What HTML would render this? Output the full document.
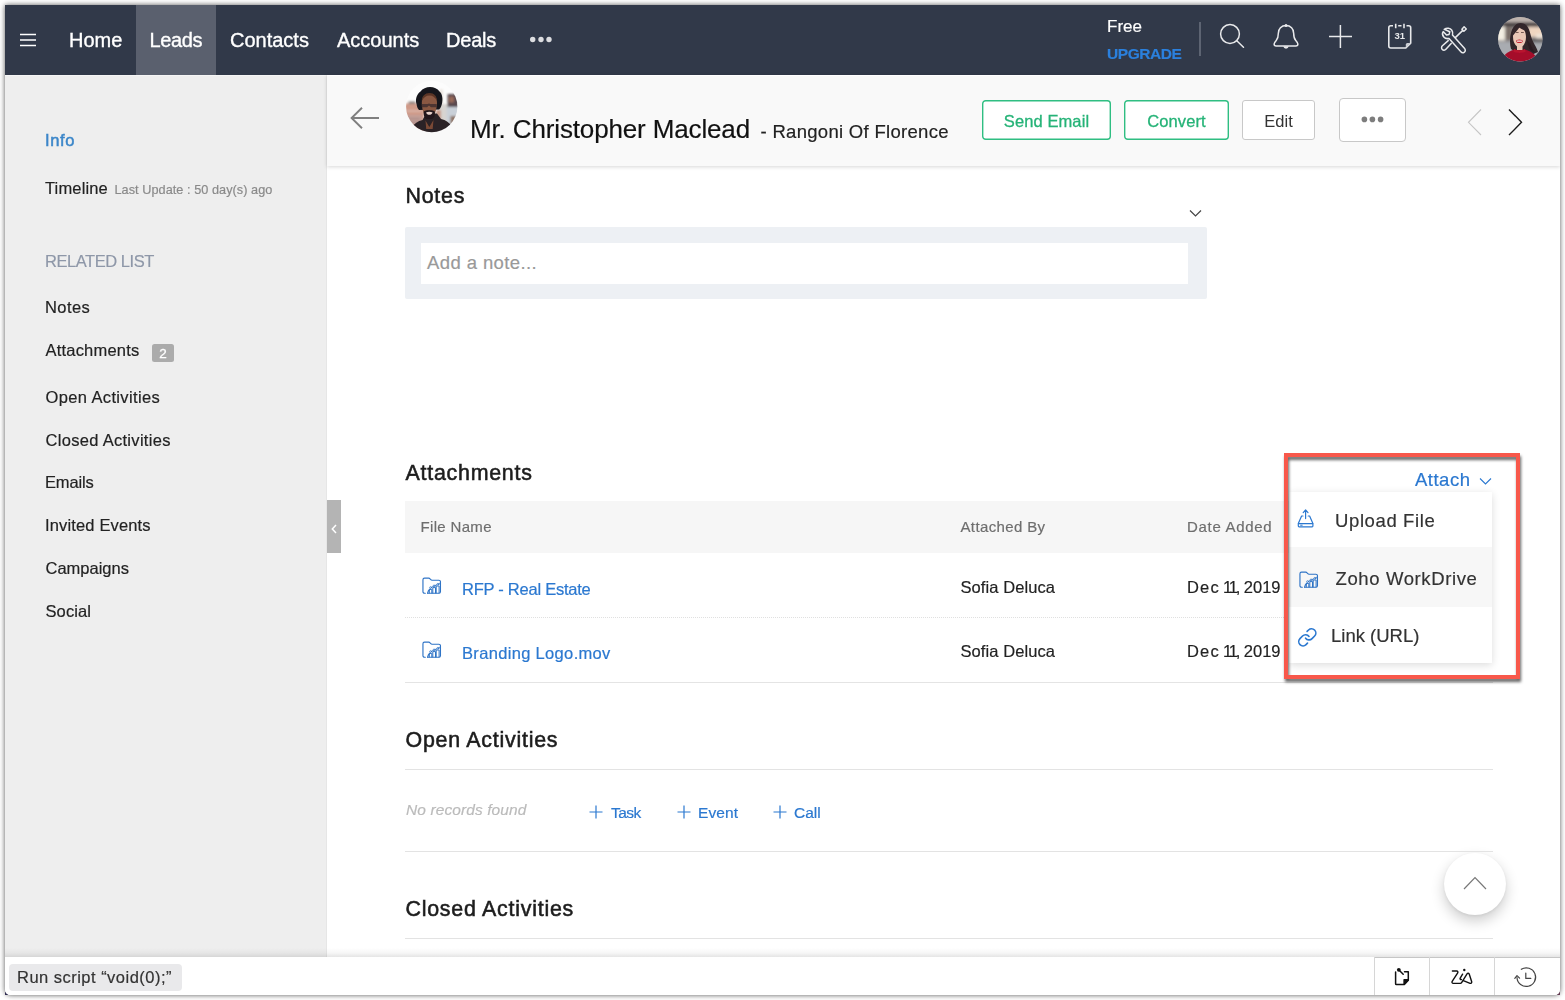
<!DOCTYPE html>
<html lang="en">
<head>
<meta charset="utf-8">
<title>Mr. Christopher Maclead - Leads</title>
<style>
*{box-sizing:border-box;margin:0;padding:0}
html,body{width:1565px;height:1000px;overflow:hidden;background:#fff}
body{font-family:"Liberation Sans",Arial,sans-serif;color:#222;position:relative}
.abs,.t{position:absolute}
.t{white-space:nowrap;line-height:1;-webkit-text-stroke-width:.18px}
#win{transform:translateZ(0);position:absolute;left:5px;top:5px;width:1555px;height:990px;background:#fff;border-radius:0 0 5.500px 5.500px;box-shadow:0 0 5px rgba(0,0,0,.6),0 0 10px rgba(0,0,0,.1);overflow:hidden}
#corner-l{position:absolute;left:5px;top:989px;width:6px;height:6px;background:#3e3a66}
#corner-r{position:absolute;left:1554px;top:989px;width:6px;height:6px;background:#7a4a66}
/* top bar */
#topbar{position:absolute;left:0;top:0;width:1555px;height:70px;background:#313949}
#tab-active{position:absolute;left:131px;top:0;width:80px;height:70px;background:#5a606e}
.nav{color:#fff;font-size:20px;top:25px;-webkit-text-stroke:.35px #fff}
/* sidebar */
#side{position:absolute;left:0;top:70px;width:322px;height:882px;background:#eeeeee;border-right:1px solid #e6e6e6;border-top:1px solid #f5f5f5}
.sl{font-size:16.5px;color:#222;left:40px}
/* header */
#head{position:absolute;left:322px;top:70px;width:1233px;height:91px;border-top:1px solid #fff;background:#f9f9f9;box-shadow:0 1px 4px rgba(0,0,0,.16)}
.btn{position:absolute;border:1px solid #ccc;border-radius:3px;background:#fff;font-size:16.5px;text-align:center;white-space:nowrap}
.btn.g{border:0;background:none;color:#25b377;-webkit-text-stroke:.3px #25b377}
.btn.g svg{position:absolute;left:0;top:0;z-index:-1}
/* content */
.h2{font-size:21.400px;font-weight:400;color:#1d1d1d;left:400.500px;-webkit-text-stroke:.55px #1d1d1d}
.hr{position:absolute;left:400px;width:1088px;height:1px;background:#e3e3e3}
.blue{color:#2b78d0;-webkit-text-stroke:.2px #2b78d0}
/* bottom */
#bottom{position:absolute;left:0;top:952px;width:1555px;height:38px;background:#fff}
#bshadow{position:absolute;left:0;top:943px;width:1555px;height:9px;background:linear-gradient(to bottom,rgba(0,0,0,0),rgba(0,0,0,.035) 55%,rgba(0,0,0,.1))}
</style>
</head>
<body>
<div id="corner-l"></div><div id="corner-r"></div>
<div id="win">
<!-- TOPBAR -->
<div id="topbar">
  <div id="tab-active"></div>
  <svg class="abs" style="left:15px;top:28px" width="17" height="14" viewBox="0 0 17 14"><path d="M0 1.5h16M0 7h16M0 12.5h16" stroke="#fff" stroke-width="1.6" fill="none"/></svg>
  <div class="t nav" style="left:64px">Home</div>
  <div class="t nav" style="left:144.500px;letter-spacing:-.4px">Leads</div>
  <div class="t nav" style="left:225px">Contacts</div>
  <div class="t nav" style="left:332px">Accounts</div>
  <div class="t nav" style="left:441px;letter-spacing:-.2px">Deals</div>
  <svg class="abs" style="left:525px;top:31px" width="23" height="7" viewBox="0 0 23 7"><circle cx="2.700" cy="3.500" r="2.700" fill="#dcdde0"/><circle cx="11" cy="3.500" r="2.700" fill="#dcdde0"/><circle cx="19" cy="3.500" r="2.700" fill="#dcdde0"/></svg>
  <div class="t" style="left:1102px;top:13px;font-size:17px;color:#fff">Free</div>
  <div class="t" style="left:1102px;top:40.500px;font-size:15.500px;color:#2b80dd;font-weight:700;letter-spacing:-.45px">UPGRADE</div>
  <div class="abs" style="left:1194px;top:17px;width:2px;height:34px;background:#5d6472"></div>
  <!-- search -->
  <svg class="abs" style="left:1214px;top:17px" width="28" height="28" viewBox="0 0 28 28" fill="none" stroke="#e8e9eb" stroke-width="1.5" stroke-linecap="round"><circle cx="11" cy="12" r="9.4"/><path d="M17.8 18.8L24.5 25.3"/></svg>
  <!-- bell -->
  <svg class="abs" style="left:1267px;top:18px" width="28" height="28" viewBox="0 0 28 28" fill="none" stroke="#e8e9eb" stroke-width="1.5" stroke-linejoin="round"><path d="M14 2.6c-4.6 0-7.7 3.2-7.7 7.8 0 2.600-.3 5.200-2.100 7.200-1.300 1.400-2.100 2.200-2.100 3.500 0 1.200.9 2 2.100 2h19.600c1.200 0 2.100-.8 2.100-2 0-1.300-.8-2.100-2.100-3.500-1.800-2-2.100-4.600-2.100-7.200 0-4.600-3.100-7.800-7.700-7.800z"/><path d="M11.200 23.300a2.900 3.300 0 0 0 5.600 0z" fill="#e8e9eb" stroke="none"/><circle cx="14" cy="2.400" r="1.500" fill="#e8e9eb" stroke="none"/></svg>
  <!-- plus -->
  <svg class="abs" style="left:1323px;top:19px" width="25" height="25" viewBox="0 0 25 25" fill="none" stroke="#e8e9eb" stroke-width="1.5"><path d="M12.400 1v23M1 12.500h23"/></svg>
  <!-- calendar -->
  <svg class="abs" style="left:1381px;top:17px" width="28" height="30" viewBox="0 0 28 30" fill="none" stroke="#e8e9eb" stroke-width="1.600" stroke-linejoin="round"><path d="M7 3.800H4.800a2 2 0 0 0-2 2V24a2 2 0 0 0 2 2h15l4.900-4.900V5.800a2 2 0 0 0-2-2h-2.200"/><path d="M19.800 26v-3.400a1.500 1.500 0 0 1 1.500-1.500h3.400z" fill="#c9ccd2" stroke="none"/><path d="M9.700 1.800v4.400M18 1.800v4.400M12.200 3.800h3.300"/><text x="13.800" y="17.400" font-family="Liberation Sans,Arial,sans-serif" font-size="9.500" font-weight="700" fill="#e8e9eb" stroke="none" text-anchor="middle">31</text></svg>
  <!-- tools -->
  <svg class="abs" style="left:1432px;top:20px" width="30" height="30" viewBox="0 0 30 30" fill="none" stroke="#e8e9eb" stroke-width="1.500" stroke-linejoin="round" stroke-linecap="round"><path d="M7.200 4.300c2.600-1.800 6-1.300 7.600 1 1 1.500 1.200 3 .7 4.700l12.100 13.500c1 1.100.9 2.700-.2 3.600-1.100.9-2.600.8-3.500-.3L12 13.400c-1.900.5-3.900 0-5.200-1.500-1.500-1.700-1.600-3.800-.6-5.300l3.300 3.400 2.600-.6.700-2.700z"/><path d="M14.200 18.400l-5.300 5.900c-1 1.100-2.600 1.200-3.600.2s-1-2.700.1-3.700l5.800-5.200"/><path d="M18.300 12.600l7.500-7.200M24.900 4.200l2.200-2.400 2.200 2.200-2.400 2.200z"/></svg>
  <!-- user avatar -->
  <svg class="abs" style="left:1493px;top:12px" width="45" height="45" viewBox="0 0 45 45"><defs><clipPath id="cpu"><circle cx="22.300" cy="22.200" r="22.200"/></clipPath><filter id="bl1" x="-20%" y="-20%" width="140%" height="140%"><feGaussianBlur stdDeviation="1.400"/></filter><filter id="bl2" x="-20%" y="-20%" width="140%" height="140%"><feGaussianBlur stdDeviation="0.650"/></filter></defs>
   <g clip-path="url(#cpu)"><rect width="45" height="45" fill="#8f8d8f"/>
    <g filter="url(#bl1)"><rect x="-3" y="-3" width="51" height="8.500" fill="#bdb3ad"/><rect x="-3" y="5.500" width="51" height="4" fill="#3f3738"/><rect x="-3" y="9.500" width="10" height="14" fill="#f3eee2"/><rect x="30" y="10" width="18" height="10" fill="#f0d6c0"/><rect x="38" y="17" width="10" height="7" fill="#f1e6da"/><rect x="7" y="10" width="7" height="13" fill="#7a6e68"/><rect x="-3" y="25" width="51" height="23" fill="#a9acb1"/><rect x="33" y="21.500" width="15" height="4" fill="#5e5b5d"/></g>
    <g filter="url(#bl2)"><path d="M13 32c-1.500-5-1.200-12 .2-17 1.300-5 4.800-9 9.300-9 4.300 0 7 2.800 8.500 6.500 1.500 4 2 8 4 12 1.500 3.500 4 6.500 5 10.500l-8 3.500-12-2z" fill="#33262a"/><path d="M15 20c0-5.500 2.500-9.500 6.500-9.500s6.500 4 6.500 9.500c0 4-1.500 7.500-3.500 9.500v3.500h-5.500V29.500C16.500 27.500 15 24 15 20z" fill="#eac7b6"/><path d="M14.600 19c.4-5.500 3-9.300 6.800-9.300 2.500 0 4.700 1.300 6 3.800-2.500-.5-4.500-1.800-6-3-1.800 2.500-4.300 5.500-6.800 8.500z" fill="#33262a"/><path d="M17.800 15.500h2.800M23 15.500h2.800" stroke="#5b3f3a" stroke-width=".8"/><ellipse cx="21.400" cy="24.300" rx="3.300" ry="1.800" fill="#c4222f"/><rect x="18.800" y="23.500" width="5.200" height="1.300" rx=".6" fill="#f8f1f0"/>
    <path d="M4 45c.5-6 4-10 12.500-12.500 3.500 1.200 6.500 1.200 10 0C34 34.500 39 38 40 45z" fill="#a50c2c"/><path d="M16 32c3.500 1.800 7.500 1.800 11 0l.7 2.700c-4 1.700-8.300 1.700-12.400 0z" fill="#b8132f"/>
    <path d="M28.500 22c1 4 1.500 8 3.500 11l5 3c-1.500-3-3.500-6-4.500-9z" fill="#2a1f22"/></g>
   </g></svg>
</div>
<!-- SIDEBAR -->
<div id="side"></div>
<div class="t sl" style="top:127px;color:#3b86c9;-webkit-text-stroke:.5px #3b86c9;letter-spacing:.6px">Info</div>
<div class="t sl" style="top:174.500px;letter-spacing:.15px">Timeline<span style="font-size:12.700px;color:#8a8a8a;letter-spacing:.05px;margin-left:6.500px">Last Update : 50 day(s) ago</span></div>
<div class="t sl" style="top:248px;color:#8e97a8;letter-spacing:-.45px">RELATED LIST</div>
<div class="t sl" style="top:293.500px;letter-spacing:.4px">Notes</div>
<div class="t sl" style="left:40.500px;top:336.500px;letter-spacing:.2px">Attachments</div>
<div class="t abs" style="left:147px;top:339px;width:22px;height:18px;background:#ababab;border-radius:2.500px;color:#fff;font-size:13.500px;line-height:19px;text-align:center;-webkit-text-stroke:.3px #fff">2</div>
<div class="t sl" style="left:40.500px;top:383.500px;letter-spacing:.37px">Open Activities</div>
<div class="t sl" style="left:40.500px;top:426.500px;letter-spacing:.3px">Closed Activities</div>
<div class="t sl" style="top:469px;letter-spacing:-.15px">Emails</div>
<div class="t sl" style="top:512px;letter-spacing:.15px">Invited Events</div>
<div class="t sl" style="left:40.500px;top:555px">Campaigns</div>
<div class="t sl" style="left:40.500px;top:597.500px;letter-spacing:.1px">Social</div>
<div class="abs" style="left:322.300px;top:495px;width:13.600px;height:53px;background:#b4b4b4"></div>
<svg class="abs" style="left:326px;top:519px" width="6" height="10" viewBox="0 0 6 10"><path d="M5 1L1.300 5 5 9" stroke="#fff" stroke-width="1.500" fill="none"/></svg>
<!-- CONTENT -->
<div class="t h2" style="top:180.700px;letter-spacing:.75px">Notes</div>
<div class="abs" style="left:400px;top:222px;width:802px;height:72px;background:#edf0f4;border-radius:2px"></div>
<div class="abs" style="left:416px;top:238px;width:767px;height:40.500px;background:#fff"></div>
<div class="t" style="left:422px;top:249px;font-size:18.500px;color:#999;letter-spacing:.4px">Add a note...</div>
<div class="t h2" style="top:458px;letter-spacing:.75px">Attachments</div>
<div class="abs" style="left:400px;top:496.400px;width:1087px;height:51.800px;background:#f6f6f6"></div>
<div class="t" style="left:415.500px;top:514px;font-size:15px;color:#6e6e6e;letter-spacing:.33px">File Name</div>
<div class="t" style="left:955.500px;top:514px;font-size:15px;color:#6e6e6e;letter-spacing:.37px">Attached By</div>
<div class="t" style="left:1182px;top:514px;font-size:15px;color:#6e6e6e;letter-spacing:.7px">Date Added</div>
<svg class="abs" style="left:416.600px;top:571.800px" width="20" height="18" viewBox="0 0 20 18" fill="none" stroke="#2f74c6" stroke-width="1.150" stroke-linejoin="round" stroke-linecap="round"><path d="M3.300 16.200H2.500A1.550 1.550 0 0 1 .95 14.650V2.700A1.550 1.550 0 0 1 2.500 1.150h4.200c.6 0 1 .2 1.400.7l.7.800c.3.350.7.550 1.200.550h6.900a1.550 1.550 0 0 1 1.550 1.550v9.900a1.550 1.550 0 0 1-1.550 1.550H5.600"/><path d="M5.600 16.200c.3-1.800 1.100-3.200 2.300-4"/><path d="M7.300 16v-3.600h2.500V16M10.800 16v-5.400h2.700V16M14.200 16V9h2.900v7" stroke-width="1"/><path d="M8.500 10.800l3.500-1.800 3.700-1.600 1.800-1" stroke-width=".9"/><circle cx="8.600" cy="10.600" r=".9" fill="#fff" stroke-width=".8"/><circle cx="12.100" cy="8.900" r=".9" fill="#fff" stroke-width=".8"/><circle cx="15.900" cy="7.300" r=".9" fill="#fff" stroke-width=".8"/></svg>
<div class="t blue" style="left:457px;top:576px;font-size:16.500px;letter-spacing:-.25px">RFP - Real Estate</div>
<div class="t" style="left:955.500px;top:573.500px;font-size:16.500px;letter-spacing:.08px">Sofia Deluca</div>
<div class="t" style="left:1182px;top:573.500px;font-size:16.500px"><span style="letter-spacing:1.200px">De</span>c<span style="letter-spacing:-.4px"> </span><span style="letter-spacing:-3.500px">1</span><span style="letter-spacing:-2px">1</span><span style="letter-spacing:-1.200px">,</span> 2019</div>
<div class="abs" style="left:400px;top:611.500px;width:1087px;height:0;border-top:1px dotted #e0e0e0"></div>
<svg class="abs" style="left:416.600px;top:636.200px" width="20" height="18" viewBox="0 0 20 18" fill="none" stroke="#2f74c6" stroke-width="1.150" stroke-linejoin="round" stroke-linecap="round"><path d="M3.300 16.200H2.500A1.550 1.550 0 0 1 .95 14.650V2.700A1.550 1.550 0 0 1 2.500 1.150h4.200c.6 0 1 .2 1.400.7l.7.800c.3.350.7.550 1.200.550h6.900a1.550 1.550 0 0 1 1.550 1.550v9.900a1.550 1.550 0 0 1-1.550 1.550H5.600"/><path d="M5.600 16.200c.3-1.800 1.100-3.200 2.300-4"/><path d="M7.300 16v-3.600h2.500V16M10.800 16v-5.400h2.700V16M14.200 16V9h2.900v7" stroke-width="1"/><path d="M8.500 10.800l3.500-1.800 3.700-1.600 1.800-1" stroke-width=".9"/><circle cx="8.600" cy="10.600" r=".9" fill="#fff" stroke-width=".8"/><circle cx="12.100" cy="8.900" r=".9" fill="#fff" stroke-width=".8"/><circle cx="15.900" cy="7.300" r=".9" fill="#fff" stroke-width=".8"/></svg>
<div class="t blue" style="left:457px;top:640px;font-size:16.500px;letter-spacing:.33px">Branding Logo.mov</div>
<div class="t" style="left:955.500px;top:637.500px;font-size:16.500px;letter-spacing:.08px">Sofia Deluca</div>
<div class="t" style="left:1182px;top:637.500px;font-size:16.500px"><span style="letter-spacing:1.200px">De</span>c<span style="letter-spacing:-.4px"> </span><span style="letter-spacing:-3.500px">1</span><span style="letter-spacing:-2px">1</span><span style="letter-spacing:-1.200px">,</span> 2019</div>
<div class="abs" style="left:400px;top:677px;width:1088px;height:1px;background:#e4e4e4"></div>
<!-- attach dropdown -->
<div class="t blue" style="left:1410px;top:465.500px;font-size:18.500px;letter-spacing:.5px">Attach</div>
<svg class="abs" style="left:1474px;top:472px" width="13" height="9" viewBox="0 0 13 9" fill="none" stroke="#2b78d0" stroke-width="1.100"><path d="M1 1.500l5.500 5.500L12 1.500"/></svg>
<div class="abs" style="left:1284px;top:487px;width:203px;height:171px;background:#fff;box-shadow:0 2px 8px rgba(0,0,0,.14)"></div>
<div class="abs" style="left:1284px;top:542px;width:203px;height:60px;background:#f7f7f7"></div>
<svg class="abs" style="left:1292px;top:504px" width="18" height="19" viewBox="0 0 18 19" fill="none" stroke="#2b78d0" stroke-width="1.200" stroke-linejoin="round" stroke-linecap="round"><path d="M8.600 1.200v8.400M6.200 3.600l2.400-2.600 2.400 2.600"/><path d="M6 7H4.600L1.300 14.500v2.600a.8.800 0 0 0 .8.800h13a.8.800 0 0 0 .8-.8v-2.600L12.600 7h-1.400"/><path d="M1.500 14.600h14.200"/><path d="M3.600 16.200h1.600" stroke-width="1"/></svg>
<div class="t" style="left:1330px;top:507px;font-size:18.500px;color:#333;letter-spacing:.62px">Upload File</div>
<svg class="abs" style="left:1294.300px;top:565.600px" width="20" height="18" viewBox="0 0 20 18" fill="none" stroke="#2f74c6" stroke-width="1.150" stroke-linejoin="round" stroke-linecap="round"><path d="M3.300 16.200H2.500A1.550 1.550 0 0 1 .95 14.650V2.700A1.550 1.550 0 0 1 2.500 1.150h4.200c.6 0 1 .2 1.400.7l.7.800c.3.350.7.550 1.200.550h6.900a1.550 1.550 0 0 1 1.550 1.550v9.900a1.550 1.550 0 0 1-1.550 1.550H5.600"/><path d="M5.600 16.200c.3-1.800 1.100-3.200 2.300-4"/><path d="M7.300 16v-3.600h2.500V16M10.800 16v-5.400h2.700V16M14.200 16V9h2.900v7" stroke-width="1"/><path d="M8.500 10.800l3.500-1.800 3.700-1.600 1.800-1" stroke-width=".9"/><circle cx="8.600" cy="10.600" r=".9" fill="#fff" stroke-width=".8"/><circle cx="12.100" cy="8.900" r=".9" fill="#fff" stroke-width=".8"/><circle cx="15.900" cy="7.300" r=".9" fill="#fff" stroke-width=".8"/></svg>
<div class="t" style="left:1330.500px;top:565px;font-size:18.500px;color:#333;letter-spacing:.62px">Zoho WorkDrive</div>
<svg class="abs" style="left:1292.300px;top:622px" width="20.600" height="20.600" viewBox="0 0 24 24" fill="none" stroke="#2b78d0" stroke-width="1.900" stroke-linecap="round"><path d="M10 13a5 5 0 0 0 7.540.540l3-3a5 5 0 0 0-7.070-7.070l-1.720 1.710"/><path d="M14 11a5 5 0 0 0-7.540-.540l-3 3a5 5 0 0 0 7.070 7.070l1.710-1.710"/></svg>
<div class="t" style="left:1326px;top:622px;font-size:18.500px;color:#333">Link (URL)</div>
<div class="abs" style="left:1279px;top:448px;width:236px;height:226px;border:4.500px solid #f8584b;filter:drop-shadow(1px 3px 1.500px rgba(0,0,0,.6))"></div>
<!-- open activities -->
<div class="t" style="left:401px;top:797px;font-size:15.500px;color:#bbb;font-style:italic;letter-spacing:.1px">No records found</div>
<svg class="abs" style="left:583.500px;top:799.500px" width="14" height="14" viewBox="0 0 14 14" stroke="#2b78d0" stroke-width="1.200"><path d="M7 .5v13M.5 7h13"/></svg>
<div class="t blue" style="left:606px;top:799.500px;font-size:15.500px;letter-spacing:-.5px">Task</div>
<svg class="abs" style="left:671.500px;top:799.500px" width="14" height="14" viewBox="0 0 14 14" stroke="#2b78d0" stroke-width="1.200"><path d="M7 .5v13M.5 7h13"/></svg>
<div class="t blue" style="left:693px;top:799.500px;font-size:15.500px;letter-spacing:.1px">Event</div>
<svg class="abs" style="left:767.500px;top:799.500px" width="14" height="14" viewBox="0 0 14 14" stroke="#2b78d0" stroke-width="1.200"><path d="M7 .5v13M.5 7h13"/></svg>
<div class="t blue" style="left:789px;top:799.500px;font-size:15.500px">Call</div>
<svg class="abs" style="left:1184px;top:204px" width="13" height="9" viewBox="0 0 13 9" fill="none" stroke="#444" stroke-width="1.200"><path d="M1 1.500l5.500 5.500L12 1.500"/></svg>
<!-- scroll top -->
<div class="abs" style="left:1439px;top:848px;width:62px;height:62px;border-radius:50%;background:#fff;box-shadow:0 6px 14px rgba(0,0,0,.2),0 1px 3px rgba(0,0,0,.06)"></div>
<svg class="abs" style="left:1458px;top:871px" width="24" height="14" viewBox="0 0 24 14" fill="none" stroke="#777" stroke-width="1.200"><path d="M1 13L12 1.500 23 13"/></svg>
<div class="t h2" style="top:725px;letter-spacing:.75px">Open Activities</div>
<div class="hr" style="top:764px"></div>
<div class="hr" style="top:846px"></div>
<div class="t h2" style="top:894.200px;letter-spacing:.75px">Closed Activities</div>
<div class="hr" style="top:933px"></div>
<!-- HEADER -->
<div id="head"></div>
<svg class="abs" style="left:344px;top:101px" width="32" height="24" viewBox="0 0 32 24" fill="none" stroke="#808080" stroke-width="1.900"><path d="M30 12H2.800M13 1.800L2.600 12 13 22.200"/></svg>
<svg class="abs" style="left:400px;top:75px" width="54" height="54" viewBox="0 0 54 54"><defs><clipPath id="cpl"><circle cx="26.700" cy="26.500" r="25.700"/></clipPath><filter id="bl3" x="-20%" y="-20%" width="140%" height="140%"><feGaussianBlur stdDeviation="0.900"/></filter><filter id="bl4" x="-20%" y="-20%" width="140%" height="140%"><feGaussianBlur stdDeviation="0.600"/></filter></defs>
 <g clip-path="url(#cpl)"><rect width="54" height="54" fill="#fcfcfc"/>
  <g filter="url(#bl3)"><rect x="0" y="23.500" width="19" height="31" fill="#cf9a88"/><rect x="3.500" y="21.500" width="7" height="2.500" fill="#8d827e"/><rect x="1" y="30" width="16" height="2" fill="#d9b3a6"/><rect x="0" y="35" width="17" height="11" fill="#c39f97"/><rect x="2" y="38" width="13" height="1.500" fill="#a98a86"/><rect x="2" y="42" width="13" height="1.500" fill="#a98a86"/>
  <rect x="34.500" y="9.500" width="3.500" height="30" fill="#e9e4de"/><rect x="33" y="24" width="10" height="24" fill="#d8d4d0"/><rect x="41.500" y="26" width="13" height="28" fill="#c9d0d8"/><rect x="42.500" y="14" width="11" height="13" fill="#584a50"/><rect x="44" y="16.500" width="5" height="6" fill="#9a6a58"/><rect x="45.500" y="36" width="9" height="12" fill="#8f7668"/><rect x="31" y="30" width="5" height="10" fill="#c79a88"/></g>
  <g filter="url(#bl4)"><path d="M7 47.500c2-4 6-6.500 10.500-7.500l3.500-6.500h11l4 5.500c5 1 8.500 3.500 10.500 7.500v8H7z" fill="#2b2125"/>
  <path d="M11.500 24c-1.500-5 .5-10 4-12.500 2-3 6-4.500 9.500-4.500 4 0 7.500 1.500 9.500 4.500 3 2.500 3.500 8 2.500 12-.5 2.500-1.500 5-3 6l-20 .5c-1.500-1.500-2-3.500-2.500-6z" fill="#16171c"/>
  <path d="M16.800 22.500c0-5 3-8.500 7.500-8.500s7.700 3.500 7.700 8.500c0 4-1 9-3 12.500-1.200 2-3 3.500-4.700 3.500s-3.500-1.500-4.700-3.500c-2-3.500-2.800-8.500-2.800-12.500z" fill="#8a5943"/>
  <path d="M16.800 21c1.500-3.500 4.500-5.500 7.700-5.500s6 2 7.500 5.500c0-5-3-8-7.500-8s-7.700 3-7.700 8z" fill="#5b3527"/>
  <path d="M16.500 24h6.200l1.300-.6 1.300.6h6.400v3.200h-5.800l-1.900-1.600-1.900 1.600h-5.600z" fill="#3a2a2a" opacity=".75"/>
  <path d="M18.800 31.500c1.500-1.800 9.500-1.800 11 0 .7 3-.6 6.200-2.800 7.500h-5.500c-2.200-1.300-3.400-4.500-2.700-7.500z" fill="#21171a"/><path d="M21 32.400c1.900-.8 4.700-.8 6.600 0-.6 1.600-1.800 2.300-3.300 2.300s-2.700-.7-3.300-2.300z" fill="#e9d2cb"/>
  <path d="M20.500 40.500l3.800 6.500 4.200-7-.8 9h-6.500z" fill="#7a4936"/></g>
 </g></svg>
<div class="t" style="left:465px;top:110.500px;font-size:26px;color:#111;letter-spacing:-.14px">Mr. Christopher Maclead</div>
<div class="t" style="left:755.500px;top:117.500px;font-size:18.500px;color:#222;letter-spacing:.3px">- Rangoni Of Florence</div>
<div class="btn g" style="left:977px;top:95px;width:129px;height:40px;line-height:43px;letter-spacing:.1px;z-index:0"><svg width="129" height="40" viewBox="0 0 129 40"><rect x=".7" y=".7" width="127.600" height="38.600" rx="3" fill="#fff" stroke="#2fbe82" stroke-width="1.400"/></svg>Send Email</div>
<div class="btn g" style="left:1119px;top:95px;width:105px;height:40px;line-height:43px;letter-spacing:.1px;z-index:0"><svg width="105" height="40" viewBox="0 0 105 40"><rect x=".7" y=".7" width="103.600" height="38.600" rx="3" fill="#fff" stroke="#2fbe82" stroke-width="1.400"/></svg>Convert</div>
<div class="btn" style="left:1237px;top:95px;width:73px;height:40px;line-height:40px;color:#333;border-color:#c8c8c8">Edit</div>
<div class="btn" style="left:1334px;top:93px;width:67px;height:44px;border-color:#c8c8c8;border-radius:4px"></div>
<svg class="abs" style="left:1356px;top:111px" width="23" height="7" viewBox="0 0 23 7" fill="#7d7d7d"><circle cx="3.400" cy="3.400" r="2.800"/><circle cx="11.400" cy="3.400" r="2.800"/><circle cx="19.600" cy="3.400" r="2.800"/></svg>
<svg class="abs" style="left:1461px;top:103px" width="16" height="28" viewBox="0 0 16 28" fill="none" stroke="#c6c6c6" stroke-width="1.100"><path d="M15 1.500L2.500 14.300 15 27"/></svg>
<svg class="abs" style="left:1502px;top:103px" width="16" height="28" viewBox="0 0 16 28" fill="none" stroke="#1c1c1c" stroke-width="1.400"><path d="M2 1.500l12.500 12.800L2 27"/></svg>
<!-- BOTTOM -->
<div id="bshadow"></div>
<div id="bottom">
 <div class="abs" style="left:1369px;top:0;width:186px;height:1px;background:#c6c6c6"></div>
 <div class="abs" style="left:4px;top:7px;width:173px;height:27px;background:#e9e9eb;border-radius:4px"></div>
 <div class="t" style="left:12px;top:12px;font-size:16.500px;color:#333;letter-spacing:.48px">Run script “void(0);”</div>
 <div class="abs" style="left:1369px;top:0;width:1px;height:38px;background:#d6d6d6"></div>
 <div class="abs" style="left:1424px;top:0;width:1px;height:38px;background:#d6d6d6"></div>
 <div class="abs" style="left:1489px;top:0;width:1px;height:38px;background:#d6d6d6"></div>
 <svg class="abs" style="left:1388px;top:10px" width="19" height="20" viewBox="0 0 19 20" fill="none" stroke="#111" stroke-width="1.500" stroke-linejoin="round" stroke-linecap="round"><path d="M11.500 4.800h3.800v8.400L11.300 17.500H3.400a.8.800 0 0 1-.8-.8V5"/><path d="M15.300 12.800h-4.200v4.500z" fill="#111"/><path d="M6.200 3.200l4 4"/><circle cx="5.800" cy="2.800" r="1.900" fill="#111" stroke="none"/></svg>
 <svg class="abs" style="left:1445px;top:11px" width="25" height="18" viewBox="0 0 25 18" fill="none" stroke="#111" stroke-width="1.400" stroke-linejoin="round" stroke-linecap="round"><path d="M2.400 3h4.300c1 0 1.500 1 1 1.800L2.200 13.400c-.6 1 0 2 1.100 2h7c.6 0 1-.3 1.300-.8l5.600-8.900c.5-.8 1.700-.6 2 .3l2.500 7.800c.3 1-.7 1.900-1.600 1.500l-6.800-2.700"/><path d="M12.600 6.200l-2.400 3.900c-.5.800.3 1.700 1.200 1.400"/><circle cx="14.300" cy="2" r="1.200" fill="#111" stroke="none"/></svg>
 <svg class="abs" style="left:1508px;top:9px" width="25" height="22" viewBox="0 0 25 22" fill="none" stroke="#444" stroke-width="1.200" stroke-linecap="round" stroke-linejoin="round"><path d="M8.300 3.300A9.300 9.300 0 1 1 4 11.500"/><path d="M1.800 12.300L4 9.600l2.600 2.500"/><path d="M12.800 7v5.400h5"/></svg>
</div>
</div>
</body>
</html>
